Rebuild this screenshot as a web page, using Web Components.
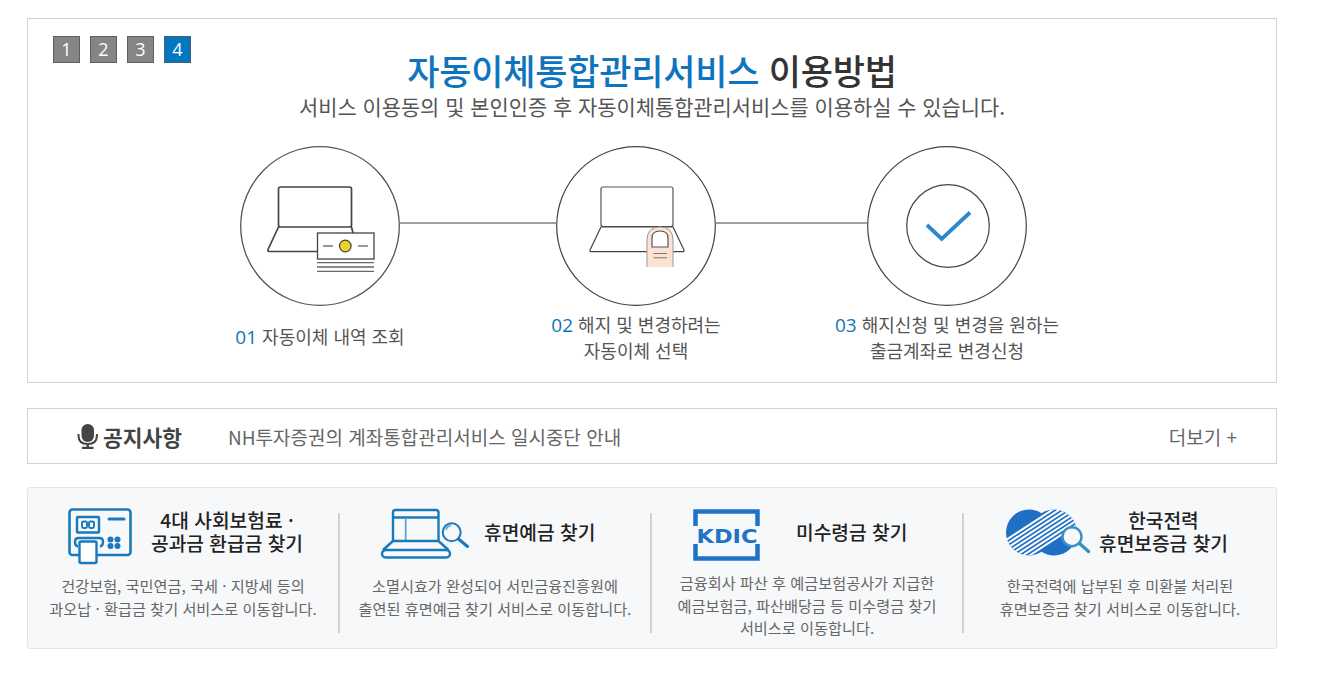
<!DOCTYPE html>
<html lang="ko">
<head>
<meta charset="utf-8">
<title>자동이체통합관리서비스</title>
<style>
  html, body { margin: 0; background: #fff; }
  body { font-family: "Noto Sans CJK KR", "Noto Sans", sans-serif; color: #333; }
  service-card [slot="title"] b { display: block; font-weight: inherit; }
</style>
</head>
<body>
<main-page>
  <guide-banner>
    <span slot="accent">자동이체통합관리서비스</span>
    <span slot="rest">이용방법</span>
    <span slot="sub">서비스 이용동의 및 본인인증 후 자동이체통합관리서비스를 이용하실 수 있습니다.</span>
    <guide-step slot="step1" num="01">
      <svg slot="icon" width="160" height="160" viewBox="0 0 160 160" fill="none">
        <circle cx="80" cy="80" r="79.3" stroke="#555" stroke-width="1.3"/>
        <rect x="38.5" y="41" width="73" height="40" rx="2" stroke="#444" stroke-width="1.7"/>
        <path d="M38.5 81 28 103.500q-.6 2 1.500 2H77M111.500 81l1.500 6" stroke="#444" stroke-width="1.7" stroke-linejoin="round"/>
        <rect x="77.500" y="87" width="56.500" height="26" fill="#fff" stroke="#444" stroke-width="1.300"/>
        <circle cx="105.300" cy="100" r="5.800" fill="#ecd32a" stroke="#444" stroke-width="1.200"/>
        <path d="M83 100h10M118 100h10" stroke="#777" stroke-width="1.600"/>
        <path d="M77 116.700h57M77 121h57M77 125.300h57" stroke="#666" stroke-width="1.300"/>
      </svg>
      <span slot="line">자동이체 내역 조회</span>
    </guide-step>
    <guide-step slot="step2" num="02">
      <svg slot="icon" width="160" height="160" viewBox="0 0 160 160" fill="none">
        <circle cx="80" cy="80" r="79.3" stroke="#444" stroke-width="1.200"/>
        <rect x="45" y="41" width="72" height="39.500" rx="2" stroke="#555" stroke-width="1.200"/>
        <path d="M45 81h72l11 23q.5 1.700-1.500 1.700h-91q-2 0-1.500-1.700z" stroke="#444" stroke-width="1.200" stroke-linejoin="round"/>
        <path d="M91 121V94q0-13 13-13t13 13v27" fill="#fbe2d3" stroke="#999" stroke-width="1"/>
        <path d="M96 101V92q0-7 8-7t8 7v9z" fill="#fff" stroke="#555" stroke-width="1.200" stroke-linejoin="round"/>
        <path d="M97.500 107.500h13.500M97.500 111.700h13.500" stroke="#777" stroke-width="1.100"/>
      </svg>
      <span slot="line">해지 및 변경하려는</span>
      <span slot="line2">자동이체 선택</span>
    </guide-step>
    <guide-step slot="step3" num="03">
      <svg slot="icon" width="160" height="160" viewBox="0 0 160 160" fill="none">
        <circle cx="80" cy="80" r="79.3" stroke="#444" stroke-width="1.200"/>
        <circle cx="81" cy="80" r="41.300" stroke="#444" stroke-width="1.200"/>
        <path d="M60 79 74.700 92.800 103 66.500" stroke="#2b88cf" stroke-width="3.800"/>
      </svg>
      <span slot="line">해지신청 및 변경을 원하는</span>
      <span slot="line2">출금계좌로 변경신청</span>
    </guide-step>
  </guide-banner>

  <notice-bar more="더보기 +">
    <span slot="label">공지사항</span>
    NH투자증권의 계좌통합관리서비스 일시중단 안내
  </notice-bar>

  <service-panel>
    <service-card style="--gap:19px">
      <svg slot="icon" width="64" height="57" viewBox="0 0 64 57" fill="none" stroke="#1a78bd">
        <rect x="1.500" y="1.500" width="61" height="45.500" rx="3" stroke-width="2.600"/>
        <rect x="9" y="9" width="22" height="15.500" rx="1" stroke-width="2.400"/>
        <rect x="14" y="13.500" width="5" height="6.500" rx="1.500" stroke-width="1.900"/>
        <rect x="21" y="13.500" width="5" height="6.500" rx="1.500" stroke-width="1.900"/>
        <path d="M41 11h15" stroke-width="3" stroke-linecap="round"/>
        <g fill="#1a78bd" stroke="none">
          <circle cx="42.500" cy="31.500" r="3"/><circle cx="49.500" cy="31.500" r="3"/>
          <circle cx="42.500" cy="38" r="3"/><circle cx="49.500" cy="38" r="3"/>
        </g>
        <path d="M10 38.500q-3-.5-3-4.500t3.500-4h21q3.500 0 3.500 4t-3 4.500" stroke-width="2.400"/>
        <rect x="11.500" y="33.500" width="17" height="21.500" rx="1.500" fill="#fff" stroke-width="2.400"/>
      </svg>
      <span slot="title"><b>4대 사회보험료 ·</b><b>공과금 환급금 찾기</b></span>
      <span>건강보험, 국민연금, 국세 · 지방세 등의<br>과오납 · 환급금 찾기 서비스로 이동합니다.</span>
    </service-card>
    <service-card style="--gap:14px">
      <svg slot="icon" width="90" height="52" viewBox="0 0 90 52" fill="none" stroke="#1a78bd">
        <path d="M13 33V4.500q0-2.500 2.500-2.500h40.500q2.500 0 2.500 2.500V33M13 9.500h45.500" stroke-width="2.400"/>
        <path d="M25.700 10v23" stroke="#5fa5d6" stroke-width="1.800"/>
        <path d="M13 33h45.500l10 9M13 33l-10 9" stroke-width="2.400"/>
        <rect x="2" y="42" width="68" height="7.500" rx="3.700" stroke-width="2.400"/>
        <circle cx="71.700" cy="24.300" r="9" fill="#f6f8fa" stroke-width="2"/>
        <path d="M66 22q1-4 5-4.500" stroke="#5fa5d6" stroke-width="1.500"/>
        <path d="M78.500 31 87.500 38.500" stroke-width="3" stroke-linecap="round"/>
      </svg>
      <span slot="title">휴면예금 찾기</span>
      <span>소멸시효가 완성되어 서민금융진흥원에<br>출연된 휴면예금 찾기 서비스로 이동합니다.</span>
    </service-card>
    <service-card style="--gap:34px;--desc-top:0">
      <svg slot="icon" width="70" height="54" viewBox="0 0 70 54" fill="none">
        <path d="M3.500 18V3.500h62V18M3.500 36v14.500h62V36" stroke="#1f73c6" stroke-width="4.500"/>
        <text x="35" y="34.500" text-anchor="middle" textLength="61" lengthAdjust="spacingAndGlyphs" font-family="DejaVu Sans" font-weight="700" font-size="20" fill="#1f73c6">KDIC</text>
      </svg>
      <span slot="title">미수령금 찾기</span>
      <span>금융회사 파산 후 예금보험공사가 지급한<br>예금보험금, 파산배당금 등 미수령금 찾기<br>서비스로 이동합니다.</span>
    </service-card>
    <service-card style="--gap:8px">
      <svg slot="icon" width="87" height="50" viewBox="0 0 87 50" fill="none">
        <defs>
          <clipPath id="kepco"><circle cx="25" cy="24.500" r="23"/><circle cx="50" cy="24.500" r="23"/></clipPath>
        </defs>
        <g clip-path="url(#kepco)">
          <rect width="87" height="50" fill="#1f6fc4"/>
          <path d="M-5 36.500 80-18.700M-5 40.900 80-14.300M-5 45.300 80-9.900M-5 49.700 80-5.500M-5 54.100 80-1.100M-5 58.500 80 3.300M-5 62.900 80 7.700M-5 67.300 80 12.100" stroke="#fff" stroke-width="2"/>
        </g>
        <circle cx="68" cy="28.700" r="9.500" fill="#f6f8fa" stroke="#3590c6" stroke-width="2.400"/>
        <path d="M75.500 35.500 84.500 43.500" stroke="#3590c6" stroke-width="3.400" stroke-linecap="round"/>
      </svg>
      <span slot="title"><b>한국전력</b><b>휴면보증금 찾기</b></span>
      <span>한국전력에 납부된 후 미환불 처리된<br>휴면보증금 찾기 서비스로 이동합니다.</span>
    </service-card>
  </service-panel>
</main-page>

<script>
class MainPage extends HTMLElement {
  constructor() {
    super();
    this.attachShadow({ mode: 'open' });
    this.shadowRoot.innerHTML = `
      <style>
        :host {
          display: flex;
          flex-direction: column;
          width: 1250px;
          margin: 18px 0 0 27px;
        }
        ::slotted(notice-bar) { margin-top: 25px; }
        ::slotted(service-panel) { margin-top: 23px; }
      </style>
      <slot></slot>
    `;
  }
}

class GuidePager extends HTMLElement {
  constructor() {
    super();
    this.attachShadow({ mode: 'open' });
    const pages = [1, 2, 3, 4];
    const active = Number(this.getAttribute('active'));
    this.shadowRoot.innerHTML = `
      <style>
        :host {
          display: flex;
          gap: 10px;
          position: absolute;
          top: 17px;
          left: 25px;
        }
        a {
          width: 25px;
          height: 25px;
          border: 1px solid #5f5f5f;
          background: #858585;
          color: #fff;
          font: 400 18px/25px "Open Sans", "Noto Sans", sans-serif;
          text-align: center;
        }
        a.on { background: #0077c3; border-color: #4a5f70; }
      </style>
      ${pages.map(n => `<a class="${n === active ? 'on' : ''}">${n}</a>`).join('')}
    `;
  }
}

class GuideBanner extends HTMLElement {
  constructor() {
    super();
    this.attachShadow({ mode: 'open' });
    this.shadowRoot.innerHTML = `
      <style>
        :host {
          display: block;
          position: relative;
          box-sizing: border-box;
          height: 365px;
          border: 1px solid #d2d2d2;
          background: #fff;
        }
        h1 {
          margin: 26px 0 0;
          font-size: 35px;
          line-height: 50px;
          font-weight: 500;
          text-align: center;
          color: #333;
          letter-spacing: -0.2px;
        }
        h1 b { font-weight: 500; color: #0f74bd; }
        p {
          margin: -3px 0 0;
          font-size: 20.900px;
          line-height: 28px;
          text-align: center;
          color: #555;
        }
        .flow {
          display: grid;
          grid-template-columns: 160px 156px 160px 151px 160px;
          margin: 26px 0 0 212px;
        }
        .line { height: 2px; background: #a0a0a0; margin-top: 76px; }
      </style>
      <guide-pager active="4"></guide-pager>
      <h1><b><slot name="accent"></slot></b> <slot name="rest"></slot></h1>
      <p><slot name="sub"></slot></p>
      <div class="flow">
        <slot name="step1"></slot>
        <div class="line"></div>
        <slot name="step2"></slot>
        <div class="line"></div>
        <slot name="step3"></slot>
      </div>
    `;
  }
}

class GuideStep extends HTMLElement {
  constructor() {
    super();
    this.attachShadow({ mode: 'open' });
    const two = this.querySelector('[slot="line2"]');
    this.shadowRoot.innerHTML = `
      <style>
        :host {
          display: flex;
          flex-direction: column;
          align-items: center;
          width: 160px;
        }
        .icon { display: block; width: 160px; height: 160px; }
        .label {
          display: flex;
          align-items: center;
          min-height: 50px;
          margin-top: 6px;
          font-size: 18px;
          line-height: 24.500px;
          color: #555;
          text-align: center;
          white-space: nowrap;
        }
        .num { color: #0f74bd; font-size: 19px; font-family: "Open Sans", sans-serif; }
      </style>
      <div class="icon"><slot name="icon"></slot></div>
      <div class="label">
        <div>
          <span class="num">${this.getAttribute('num')}</span> <slot name="line"></slot>${two ? '<br><slot name="line2"></slot>' : ''}
        </div>
      </div>
    `;
  }
}

class NoticeBar extends HTMLElement {
  constructor() {
    super();
    this.attachShadow({ mode: 'open' });
    this.shadowRoot.innerHTML = `
      <style>
        :host {
          display: flex;
          align-items: center;
          box-sizing: border-box;
          height: 56px;
          padding: 0 39px 0 49px;
          border: 1px solid #d2d2d2;
          background: #fff;
        }
        svg { flex: none; margin-right: 5px; }
        .label {
          width: 125px;
          font-size: 21.500px;
          font-weight: 700;
          color: #444;
        }
        .text { flex: 1; font-size: 19px; color: #666; }
        .more { font-size: 19px; color: #666; }
      </style>
      <svg width="21" height="25" viewBox="0 0 21 25" fill="none">
        <rect x="4.500" y="0" width="12.500" height="18" rx="6.200" fill="#444"/>
        <path d="M1.500 10v1.500q0 8.500 9.200 8.500t9.200-8.500V10" stroke="#444" stroke-width="2"/>
        <path d="M10.700 20v3M5 24h11.500" stroke="#444" stroke-width="2.400"/>
      </svg>
      <div class="label"><slot name="label"></slot></div>
      <div class="text"><slot></slot></div>
      <div class="more">${this.getAttribute('more')}</div>
    `;
  }
}

class ServicePanel extends HTMLElement {
  constructor() {
    super();
    this.attachShadow({ mode: 'open' });
    this.shadowRoot.innerHTML = `
      <style>
        :host {
          display: grid;
          grid-template-columns: repeat(4, 312px);
          box-sizing: border-box;
          height: 162px;
          padding-top: 25px;
          border: 1px solid #e2e4e6;
          border-radius: 3px;
          background: #f6f8fa;
        }
      </style>
      <slot></slot>
    `;
  }
}

class ServiceCard extends HTMLElement {
  constructor() {
    super();
    this.attachShadow({ mode: 'open' });
    this.shadowRoot.innerHTML = `
      <style>
        :host {
          display: block;
          box-sizing: border-box;
          height: 120px;
          border-right: 2px solid #cfd1d3;
        }
        :host(:last-child) { border-right: 0; }
        .head {
          display: flex;
          align-items: flex-start;
          height: 52px;
          padding-left: 40px;
          margin-top: -7px;
          margin-bottom: 13px;
        }
        .icon { flex: none; margin: 2px var(--gap, 14px) 0 0; line-height: 0; }
        .title {
          align-self: center;
          font-size: 19.200px;
          font-weight: 500;
          line-height: 23px;
          color: #222;
          text-align: center;
          white-space: nowrap;
        }
        .desc {
          padding-top: var(--desc-top, 3px);
          font-size: 15.200px;
          line-height: 22.500px;
          color: #666;
          text-align: center;
          white-space: nowrap;
        }
      </style>
      <div class="head">
        <div class="icon"><slot name="icon"></slot></div>
        <div class="title"><slot name="title"></slot></div>
      </div>
      <div class="desc"><slot></slot></div>
    `;
  }
}

customElements.define('guide-pager', GuidePager);
customElements.define('guide-step', GuideStep);
customElements.define('guide-banner', GuideBanner);
customElements.define('notice-bar', NoticeBar);
customElements.define('service-card', ServiceCard);
customElements.define('service-panel', ServicePanel);
customElements.define('main-page', MainPage);
</script>
</body>
</html>
